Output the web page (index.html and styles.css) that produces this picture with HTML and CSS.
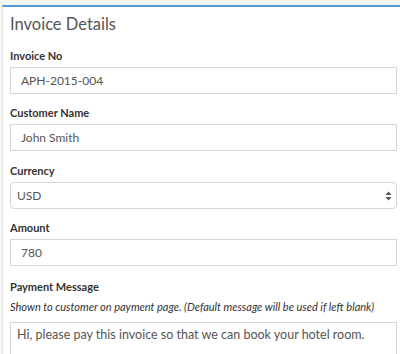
FILE: index.html
```html
<!DOCTYPE html>
<html lang="en">
  <head>
    <meta charset="UTF-8" />
    <title>Invoice Details</title>
    <link rel="stylesheet" href="styles.css">
  </head>
  <body>
    <div class="panel">
      <h3 class="panel-title">Invoice Details</h3>
      <form class="invoice-form">
        <div class="form-group">
          <label for="invoiceNo">Invoice No</label>
          <input type="text" id="invoiceNo" class="form-control" value="APH-2015-004" />
        </div>
        <div class="form-group">
          <label for="customerName">Customer Name</label>
          <input type="text" id="customerName" class="form-control" value="John Smith" />
        </div>
        <div class="form-group">
          <label for="currency">Currency</label>
          <div class="select-wrap">
            <select id="currency" class="form-control select">
              <option>USD</option>
              <option>EUR</option>
              <option>GBP</option>
            </select>
            <svg class="select-arrows" width="7" height="10" viewBox="0 0 7 10">
              <path d="M3.5 0.5 L6.5 4 L0.5 4 Z M3.5 9.5 L6.5 6 L0.5 6 Z" fill="#555" />
            </svg>
          </div>
        </div>
        <div class="form-group">
          <label for="amount">Amount</label>
          <input type="text" id="amount" class="form-control" value="780" />
        </div>
        <div class="form-group last">
          <label for="message">Payment Message</label>
          <p class="help-text">Shown to customer on payment page. (Default message will be used if left blank)</p>
          <textarea id="message" class="form-control message" rows="3">Hi, please pay this invoice so that we can book your hotel room.</textarea>
        </div>
      </form>
    </div>
  </body>
</html>
```
FILE: styles.css
```css
body {
  font-family: Lato, "Liberation Sans", sans-serif;
  background: #f6f6f6;
  margin: 0;
  overflow: hidden;
}

.panel {
  box-sizing: border-box;
  background: white;
  margin: 5px 0 0 2px;
  border-top: 2px solid #4f9bd2;
  border-left: 1px solid #e4e4e4;
  padding: 7px 3px 0 7px;
  height: 349px;
  overflow: hidden;
}

.panel-title {
  margin: 0 0 15px;
  font-size: 16.5px;
  line-height: 20px;
  font-weight: normal;
  color: #555;
}

.form-group {
  margin-bottom: 12.4px;
}

.form-group label {
  display: block;
  font-size: 11px;
  line-height: 14px;
  font-weight: bold;
  color: #333;
  margin-bottom: 4px;
}

.form-control {
  display: block;
  box-sizing: border-box;
  width: 100%;
  height: 27px;
  margin: 0;
  padding: 0 10px;
  border: 1px solid #d6d6d6;
  border-radius: 0;
  background: white;
  font-family: inherit;
  font-size: 12px;
  color: #555;
  outline: none;
}

.select-wrap {
  position: relative;
}

.select {
  appearance: none;
  -webkit-appearance: none;
  padding-left: 6px;
  border-radius: 4px;
}

.select-arrows {
  position: absolute;
  right: 5px;
  top: 9px;
}

.last {
  margin-top: 14px;
}

.last label {
  margin-bottom: 6px;
}

.help-text {
  margin: 0 0 8px;
  font-size: 11px;
  line-height: 14px;
  font-style: italic;
  color: #333;
}

.message {
  height: 40px;
  padding: 5px 6px;
  line-height: 14px;
  font-size: 12.5px;
  resize: none;
}
```
